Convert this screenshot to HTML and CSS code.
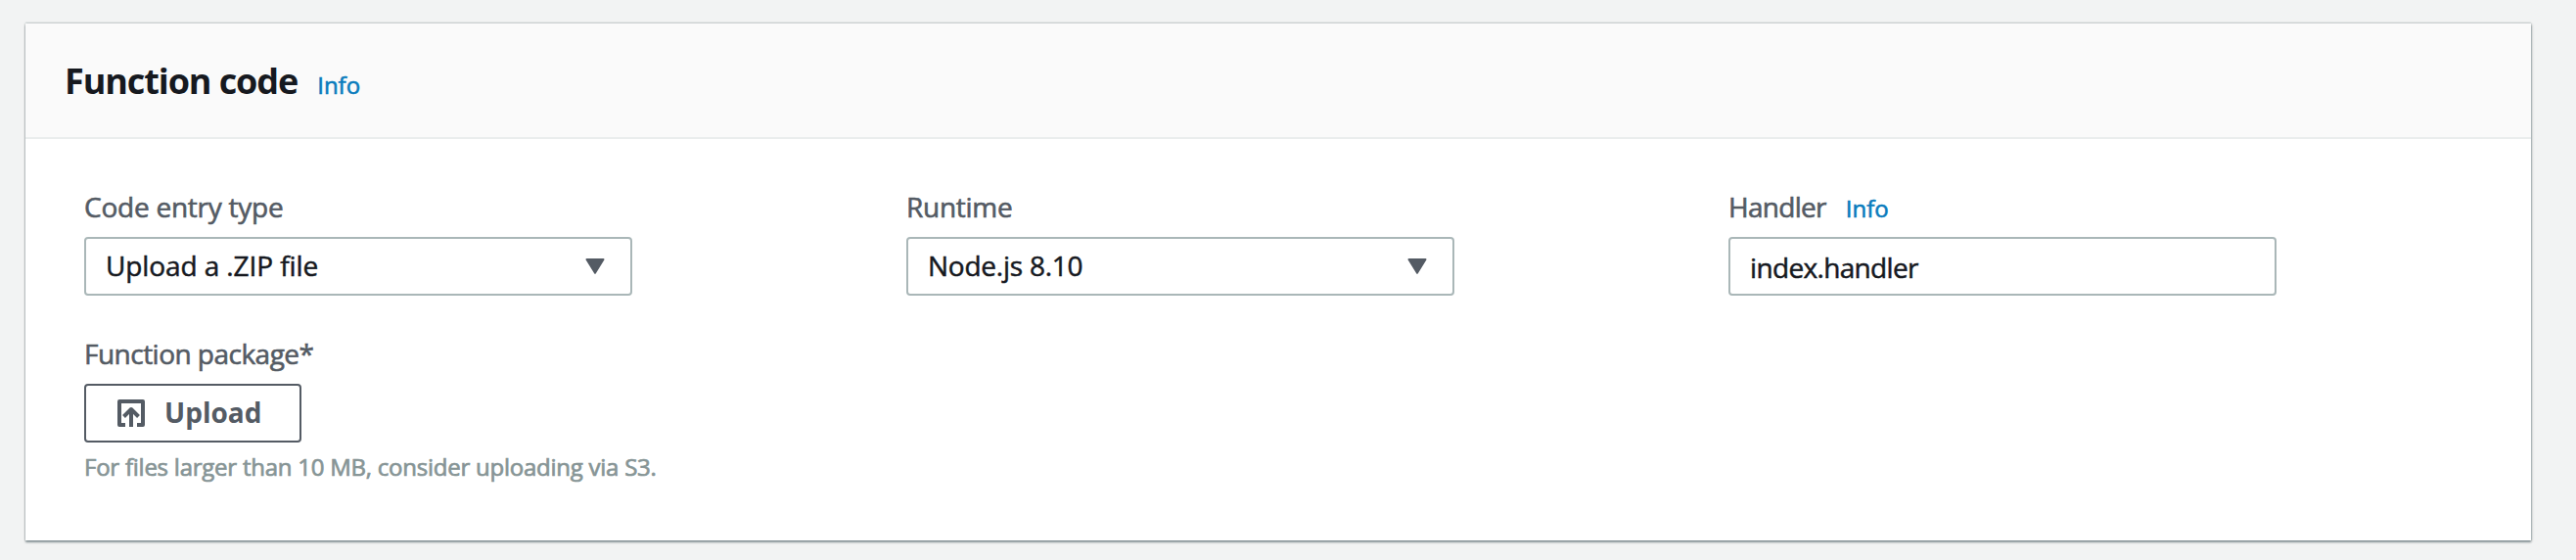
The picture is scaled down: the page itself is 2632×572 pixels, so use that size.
FILE: index.html
```
<!DOCTYPE html>
<html lang="en">
<head>
<meta charset="utf-8">
<title>Function code</title>
<link rel="stylesheet" href="styles.css">
</head>
<body>
<section class="card">
  <header class="card-header">
    <h2 class="title">Function code</h2>
    <a class="info">Info</a>
  </header>
  <div class="card-body">
    <div class="column">
      <div class="label entry-label">Code entry type</div>
      <div class="control">
        <span class="value">Upload a .ZIP file</span>
        <svg class="caret" viewBox="0 0 20 16"><path d="M1.5 1h17L10 14.8z"/></svg>
      </div>
      <div class="label package-label">Function package*</div>
      <button class="upload" type="button">
        <svg class="upload-icon" viewBox="0 0 28 28"><path d="M8 26H2V2h24v24h-6M14 28V10M6.5 17.5 14 10l7.5 7.5"/></svg>
        <span class="upload-text">Upload</span>
      </button>
      <p class="hint">For files larger than 10 MB, consider uploading via S3.</p>
    </div>
    <div class="column">
      <div class="label">Runtime</div>
      <div class="control">
        <span class="value runtime-value">Node.js 8.10</span>
        <svg class="caret" viewBox="0 0 20 16"><path d="M1.5 1h17L10 14.8z"/></svg>
      </div>
    </div>
    <div class="column">
      <div class="label handler-label"><span>Handler</span><a class="info">Info</a></div>
      <div class="control text-input"><span class="value handler-value">index.handler</span></div>
    </div>
  </div>
</section>
</body>
</html>
```
FILE: styles.css
```
* { box-sizing: border-box; }
body {
  margin: 0;
  padding: 24px 46px 20px 26px;
  height: 572px;
  background: #f2f3f3;
  color: #16191f;
  font: 28px/40px "Open Sans", "Noto Sans", sans-serif;
}
.card {
  height: 528px;
  background: #fff;
  box-shadow: 0 2px 2px rgba(0, 28, 36, .35), 1px 1px 3px rgba(0, 28, 36, .15), 0 0 2px rgba(0, 28, 36, .35), 0 -2px 0 #eaeded;
}
.card-header {
  display: flex;
  align-items: baseline;
  height: 118px;
  padding: 39px 40px 0;
  background: #fafafa;
  border-bottom: 2px solid #eaeded;
}
.title {
  margin: 0;
  font-size: 36px;
  font-weight: 700;
  letter-spacing: -1.09px;
}
.info {
  margin-left: 20px;
  color: #0a7cbd;
  font-size: 24px;
  -webkit-text-stroke: .6px;
  letter-spacing: 0;
}
.card-body {
  display: grid;
  grid-template-columns: repeat(3, 560px);
  column-gap: 280px;
  padding: 49px 60px 0;
}
.label {
  display: flex;
  align-items: baseline;
  height: 40px;
  margin: 0 0 11px;
  color: #545b64;
  letter-spacing: -.27px;
  -webkit-text-stroke: .6px;
}
.entry-label { letter-spacing: -.24px; }
.package-label { margin-top: 39px; letter-spacing: -.52px; }
.handler-label { letter-spacing: -.72px; }
.control {
  display: flex;
  align-items: center;
  justify-content: space-between;
  height: 60px;
  padding: 0 26px 0 20px;
  border: 2px solid #aab7b8;
  border-radius: 4px;
}
.value { margin-top: -2px; letter-spacing: -.1px; -webkit-text-stroke: .5px; }
.runtime-value { letter-spacing: -.24px; }
.text-input { padding-top: 4px; }
.handler-value { letter-spacing: -.66px; }
.caret {
  width: 20px;
  height: 16px;
  fill: #545b64;
  stroke: #545b64;
  stroke-width: 2;
  stroke-linejoin: round;
}
.upload {
  display: flex;
  align-items: center;
  width: 222px;
  height: 60px;
  padding: 0 32px;
  background: #fff;
  border: 2px solid #545b64;
  border-radius: 4px;
  color: #545b64;
  font: 700 28px/40px "Open Sans", "Noto Sans", sans-serif;
}
.upload-text { margin-top: -2px; }
.upload-icon {
  width: 28px;
  height: 28px;
  margin-right: 20px;
  fill: none;
  stroke: #545b64;
  stroke-width: 4;
  stroke-linejoin: round;
}
.hint {
  margin: 9px 0 0;
  color: #879596;
  font-size: 24px;
  line-height: 32px;
  letter-spacing: -.24px;
  white-space: nowrap;
  -webkit-text-stroke: .7px;
}
```
